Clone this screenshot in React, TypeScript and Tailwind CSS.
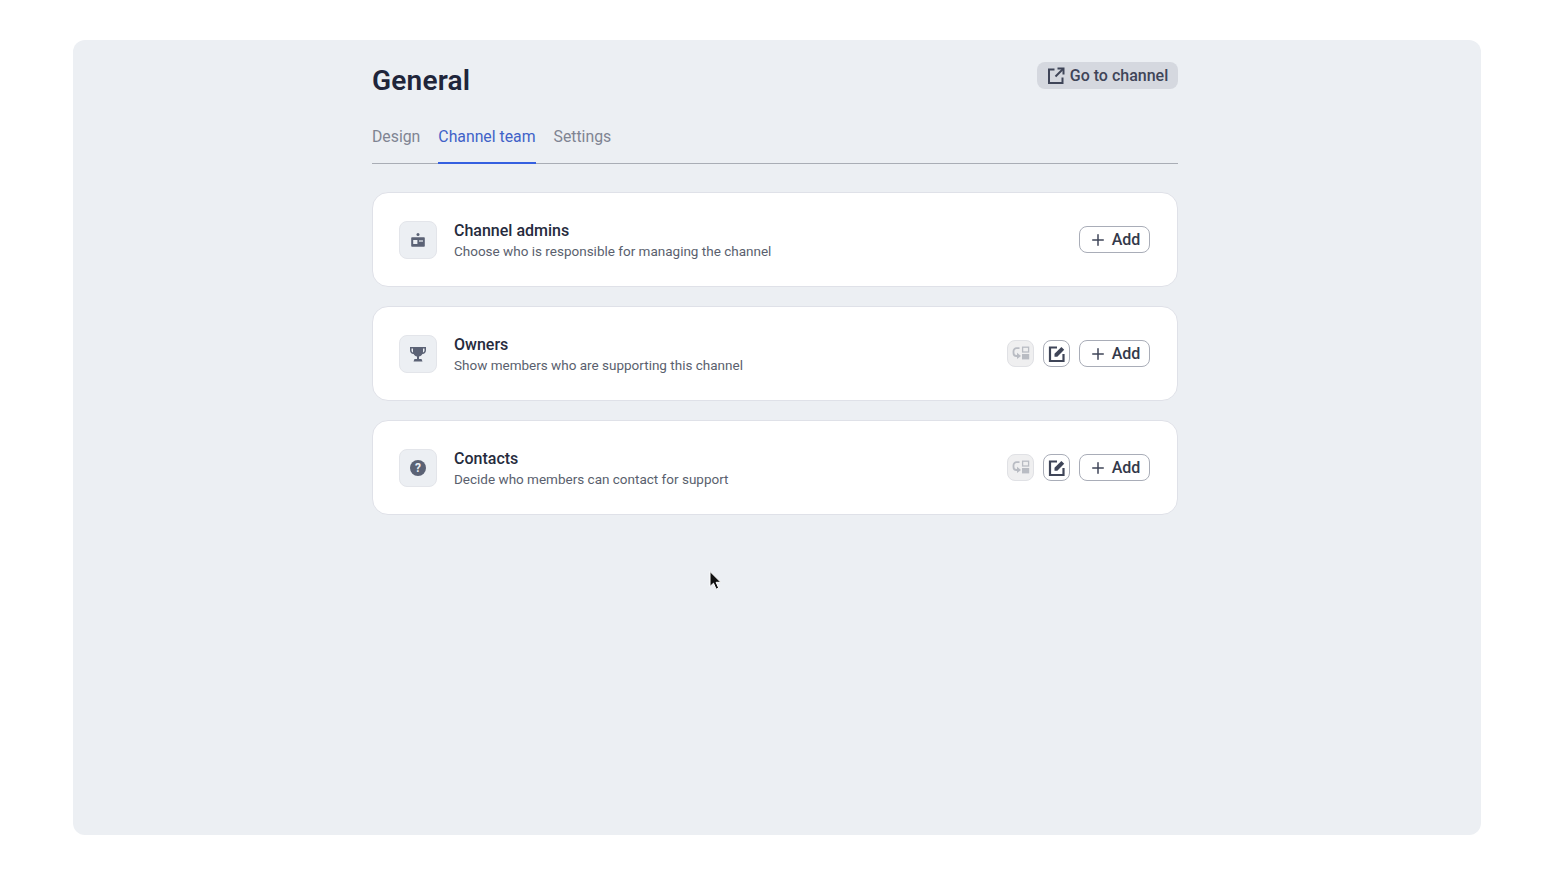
import { Plus } from "lucide-react";

const font = "font-['Roboto',sans-serif]";

function BadgeIcon() {
  return (
    <svg width="16" height="16" viewBox="0 0 16 16" fill="#5b6275">
      <circle cx="8" cy="2.400" r="1.500" />
      <path d="M2 5.200h12a.8.8 0 0 1 .8.8v8a.8.8 0 0 1-.8.8H2a.8.8 0 0 1-.8-.8V6a.8.8 0 0 1 .8-.8z" />
      <rect x="3.200" y="8" width="4.200" height="4" fill="#eceff3" />
      <rect x="9" y="8.400" width="4" height="1.200" fill="#eceff3" />
    </svg>
  );
}

function TrophyIcon() {
  return (
    <svg width="20" height="20" viewBox="0 0 20 20" fill="#5b6275">
      <path d="M2 3h16v3.200c0 2.200-1.500 3.600-3.600 3.800-.8 1.400-2 2.300-3.400 2.600V15h2.500l1 2.500h-9l1-2.500H9v-2.400c-1.400-.3-2.600-1.200-3.400-2.600C3.500 9.800 2 8.400 2 6.200V3zm1.500 1.500v1.700c0 1.200.7 2 1.600 2.300-.1-.5-.1-1-.1-1.500V4.500H3.500zm13 0H15V7c0 .5 0 1-.1 1.500.9-.3 1.600-1.100 1.600-2.300V4.500z" />
    </svg>
  );
}

function HelpIcon() {
  return (
    <div className={`flex h-4 w-4 items-center justify-center rounded-full bg-[#5b6275] text-[12px] font-bold leading-none text-[#eceff3] ${font}`}>
      ?
    </div>
  );
}

function ExternalIcon() {
  return (
    <svg width="18" height="18" viewBox="0 0 18 18" fill="none" stroke="#3f4558" strokeWidth="2">
      <path d="M7.500 2.500H2v13.500h13.500v-5.500" />
      <path d="M10.500 1.500h6v6" />
      <path d="M16 2l-7.500 7.500" />
    </svg>
  );
}

function SwapIcon() {
  return (
    <svg width="18" height="15" viewBox="0 0 18 15" fill="none">
      <path d="M7.500 2.200H4.500a3 3 0 0 0-3 3v1.800a3 3 0 0 0 3 3H6" stroke="#b9bcc3" strokeWidth="1.800" />
      <path d="M5 6.800v6.200L9 9.900z" fill="#b9bcc3" />
      <rect x="10.600" y="1.200" width="6" height="4.800" fill="none" stroke="#b9bcc3" strokeWidth="1.300" />
      <rect x="10" y="8" width="7.200" height="5.400" fill="#b9bcc3" />
    </svg>
  );
}

function EditIcon() {
  return (
    <svg width="18" height="18" viewBox="0 0 18 18" fill="none">
      <path d="M9 2.500H2v13.500h13.500V9" stroke="#3f4558" strokeWidth="2.200" />
      <path d="M6.500 11.700V8.800l6.900-6.900 2.800 2.800-6.900 7z" fill="#3f4558" />
    </svg>
  );
}

function AddButton() {
  return (
    <button className="flex h-[27px] w-[71px] items-center justify-center gap-[5px] rounded-[8px] border border-[#a9adb8] bg-white text-[16px] font-medium text-[#33394a]">
      <Plus size={18} strokeWidth={2} color="#3f4558" />
      Add
    </button>
  );
}

function RowActions() {
  return (
    <>
      <div className="flex h-[27px] w-[27px] items-center justify-center rounded-[8px] border border-[#e0e1e5] bg-[#efeff0]">
        <SwapIcon />
      </div>
      <button className="flex h-[27px] w-[27px] items-center justify-center rounded-[8px] border border-[#a9adb8] bg-white">
        <EditIcon />
      </button>
    </>
  );
}

const rows = [
  { title: "Channel admins", text: "Choose who is responsible for managing the channel", icon: <BadgeIcon />, actions: false },
  { title: "Owners", text: "Show members who are supporting this channel", icon: <TrophyIcon />, actions: true },
  { title: "Contacts", text: "Decide who members can contact for support", icon: <HelpIcon />, actions: true },
];

export default function App() {
  return (
    <div className={`relative h-[875px] w-[1555px] overflow-hidden bg-white px-[73px] py-[40px] ${font}`}>
      <main className="h-[795px] w-[1408px] rounded-[12px] bg-[#eceff3] pl-[299px] pt-[22px]">
        <div className="w-[806px]">
          {/* Header */}
          <div className="flex items-start justify-between">
            <h1 className="mt-[2px] text-[28px] font-semibold leading-[34px] tracking-[0.2px] text-[#20253a]">General</h1>
            <button className="flex h-[27px] w-[141px] items-center justify-center gap-[5px] rounded-[8px] bg-[#d5d8df] text-[16px] font-medium text-[#3f4558]">
              <ExternalIcon />
              Go to channel
            </button>
          </div>

          {/* Tabs */}
          <div className="mt-[23px] flex h-[43px] gap-[18px] border-b border-[#a9adb5] text-[15.800px]">
            <span className="pt-[4px] text-[#7f8492]">Design</span>
            <span className="-mb-px border-b-2 border-[#3560e0] pt-[4px] text-[#3f62c8]">Channel team</span>
            <span className="pt-[4px] text-[#7f8492]">Settings</span>
          </div>

          {/* Cards */}
          <div className="mt-[28px] flex flex-col gap-[19px]">
            {rows.map((r) => (
              <section
                key={r.title}
                className="flex h-[95px] items-center rounded-[16px] border border-[#dfe1e8] bg-white pl-[26px] pr-[27px]"
              >
                <div className="flex h-[38px] w-[38px] items-center justify-center rounded-[8px] border border-[#e3e5ea] bg-[#eceff3]">
                  {r.icon}
                </div>
                <div className="ml-[17px] flex-1 pt-[2px]">
                  <h2 className="text-[16px] font-medium leading-[20px] text-[#262b3d]">{r.title}</h2>
                  <p className="text-[13.500px] leading-[20px] text-[#5a5f6e]">{r.text}</p>
                </div>
                <div className="flex items-center gap-[9px]">
                  {r.actions && <RowActions />}
                  <AddButton />
                </div>
              </section>
            ))}
          </div>
        </div>
      </main>

      {/* Cursor */}
      <svg className="absolute left-[708px] top-[570px]" width="14" height="21" viewBox="0 0 14 21">
        <path d="M2 1.500v15l3.500-3.300 2.600 6 2.600-1.100-2.600-5.800h4.700z" fill="#111" stroke="#fff" strokeWidth="1" />
      </svg>
    </div>
  );
}
